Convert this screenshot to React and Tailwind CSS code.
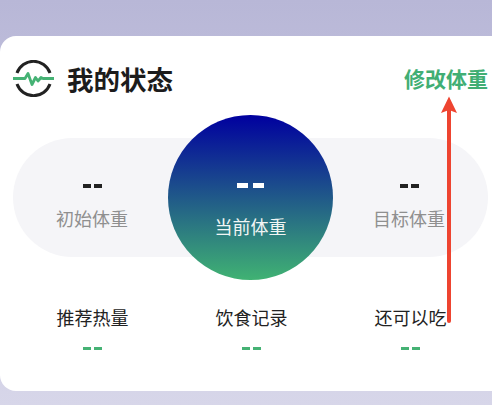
import React from 'react';

const font = { fontFamily: '"Noto Sans CJK SC", "Noto Sans", sans-serif' };

const Dash = ({ className = '', size = 'w-[8px]', gap = 'ml-[3px]' }) => (
  <div className={`flex justify-center ${className}`}>
    <span className={`block h-full bg-current ${size}`} />
    <span className={`block h-full bg-current ${size} ${gap}`} />
  </div>
);

const Side = ({ label }) => (
  <div className="w-[100px] self-start flex flex-col items-center pt-[46px]">
    <Dash className="h-[4px] text-[#222222]" />
    <div className="mt-[17px] text-[18px] leading-[26px] text-[#8f8f8f]">{label}</div>
  </div>
);

const Stat = ({ label }) => (
  <div className="flex flex-col items-center">
    <div className="text-[18px] leading-[26px] text-[#222222]">{label}</div>
    <Dash className="h-[3px] mt-[17px] text-[#45b274]" />
  </div>
);

export default function App() {
  return (
    <div
      style={font}
      className="relative w-[492px] h-[405px] overflow-hidden pt-[36px] bg-linear-to-b/srgb from-[#b8b7d7] to-[#d7d6e9]"
    >
      <div className="h-[355px] bg-white rounded-l-[16px] pl-[13px] pr-[4px] pt-[24px]">
        <div className="flex items-center justify-between h-[37px]">
          <div className="flex items-center">
            <svg width="41" height="37" viewBox="0 0 41 37" fill="none">
              <path d="M4 13A17.5 17.5 0 0 1 37 13" stroke="#222222" strokeWidth="3" />
              <path d="M4 24A17.5 17.5 0 0 0 37 24" stroke="#222222" strokeWidth="3" />
              <path
                d="M0 18.5H12L15 13.5L19 24.5L22.5 17.5L25 21L28 17.5L30 18.5H41"
                stroke="#45b274"
                strokeWidth="2.8"
                strokeLinejoin="round"
              />
            </svg>
            <div className="ml-[13px] text-[26.5px] leading-[37px] font-semibold text-[#1c1c1c]">我的状态</div>
          </div>
          <div className="text-[21px] leading-[37px] font-bold text-[#41ae74]">修改体重</div>
        </div>

        <div className="mt-[41px] w-[475px] h-[119px] rounded-full bg-[#f5f5f8] flex items-center justify-between px-[29px]">
          <Side label="初始体重" />
          <div className="w-[165px] h-[165px] shrink-0 rounded-full bg-linear-to-b/srgb from-[#00009f] to-[#40b273] flex flex-col items-center text-white pt-[68px]">
            <Dash className="h-[5px]" size="w-[11px]" gap="ml-[5px]" />
            <div className="mt-[25px] text-[18px] leading-[26px] text-[#f1f5f4]">当前体重</div>
          </div>
          <Side label="目标体重" />
        </div>

        <div className="mt-[47px] grid grid-cols-3 w-[477px]">
          <Stat label="推荐热量" />
          <Stat label="饮食记录" />
          <Stat label="还可以吃" />
        </div>
      </div>

      <svg className="absolute left-[440px] top-[96px]" width="20" height="228" viewBox="0 0 20 228" fill="none">
        <path d="M9 10V225" stroke="#ee4430" strokeWidth="4" strokeLinecap="round" />
        <path d="M9 0.5L17 17L9 14L1 17Z" fill="#ee4430" />
      </svg>
    </div>
  );
}
